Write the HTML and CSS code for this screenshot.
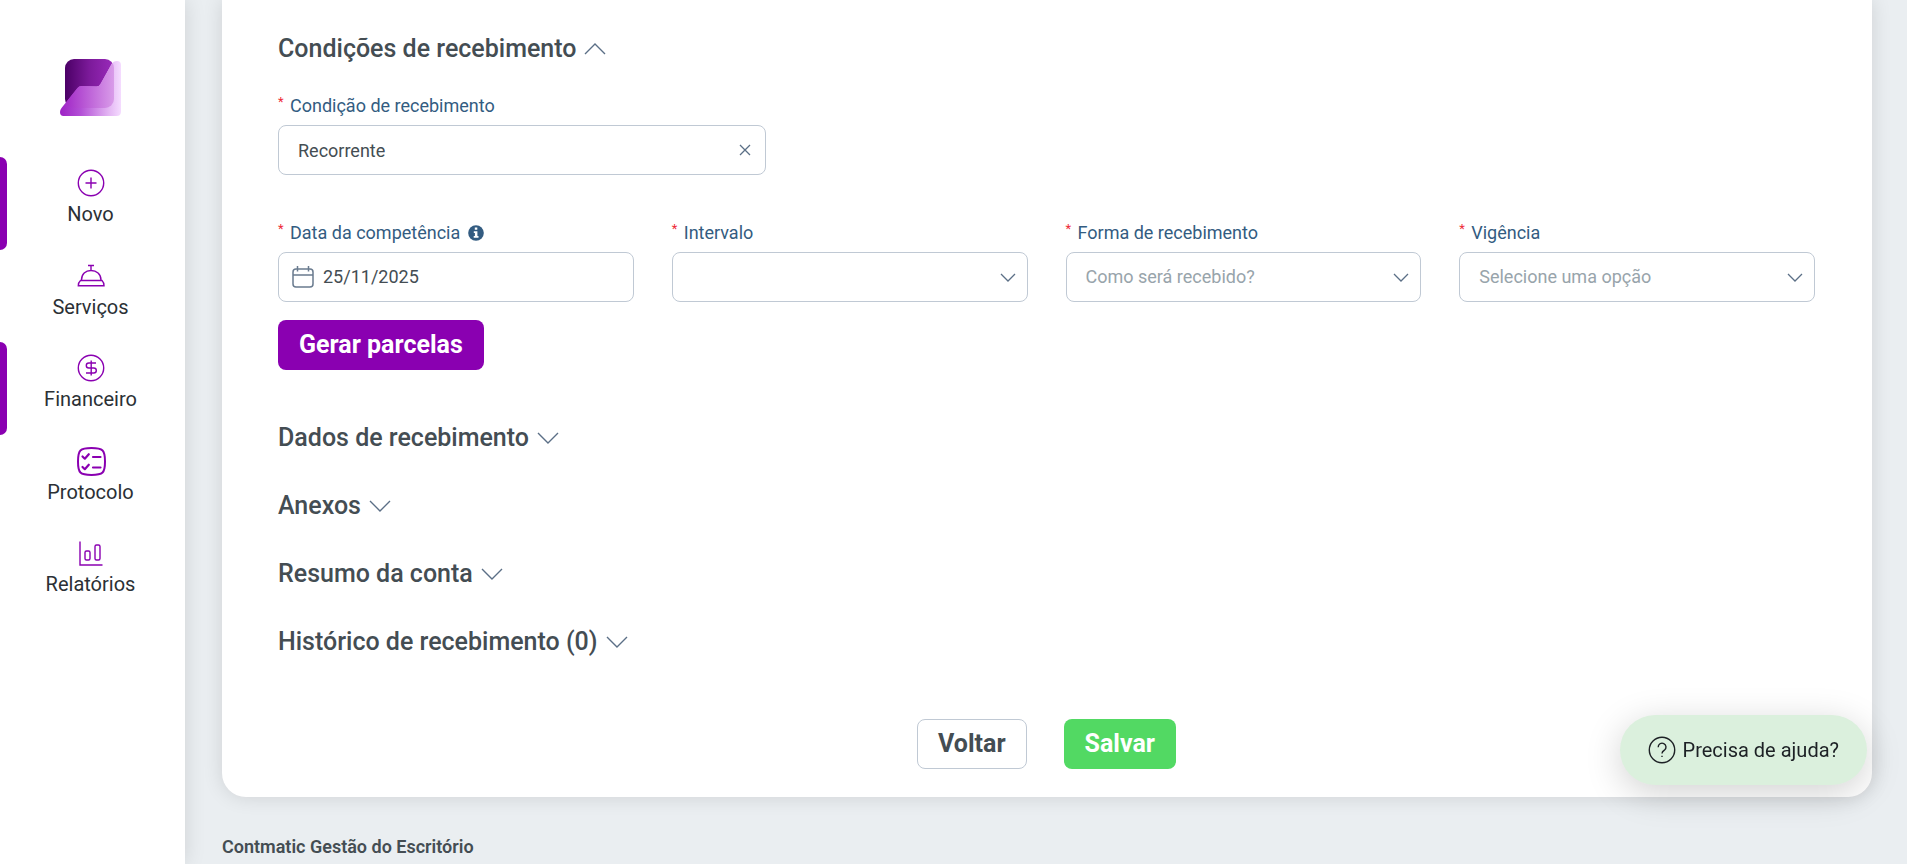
FILE: index.html
```html
<!DOCTYPE html>
<html lang="pt-BR">
<head>
<meta charset="utf-8">
<title>Contmatic Gestão do Escritório</title>
<link rel="stylesheet" href="styles.css">
</head>
<body>
<div class="app">
  <aside class="sidebar">
    <a class="logo" href="#" aria-label="Início">
      <svg width="62" height="58" viewBox="0 0 62 58">
        <defs>
          <linearGradient id="g1" x1="0" y1="0" x2="1" y2="0"><stop offset="0" stop-color="#4b0066"/><stop offset=".5" stop-color="#7c1a9a"/><stop offset="1" stop-color="#9a2bbb"/></linearGradient>
          <linearGradient id="g2" x1="0" y1="0" x2="1" y2="0"><stop offset="0" stop-color="#9c20c4"/><stop offset=".35" stop-color="#b350d6"/><stop offset=".8" stop-color="#e3b5f3"/><stop offset="1" stop-color="#f5dcff"/></linearGradient>
          <linearGradient id="g3" x1="0" y1="0" x2="1" y2="0"><stop offset="0" stop-color="#a32bc8"/><stop offset="1" stop-color="#d99ce9"/></linearGradient>
          <clipPath id="c1"><path d="M52.500 5.200Q54.500 2 58 2Q62 2 62 6V52.500Q62 57 57.500 57H4.500Q1 57 1 53Q1 51 2.500 49L18.500 29Q20 27 22.500 27L37.500 27.500Q40 27.500 41.500 25Z"/></clipPath>
        </defs>
        <rect x="6" y="0" width="49" height="49" rx="9" fill="url(#g1)"/>
        <g clip-path="url(#c1)">
          <rect width="62" height="58" fill="url(#g2)"/>
          <rect x="6" y="0" width="49" height="49" rx="9" fill="url(#g3)"/>
        </g>
      </svg>
    </a>
    <nav class="nav">
      <a class="nav-item marked" href="#">
        <svg class="nav-icon" viewBox="0 0 30 30"><circle cx="15" cy="15" r="12.700"/><path d="M15 9.500v11M9.500 15h11"/></svg>
        <span>Novo</span>
      </a>
      <a class="nav-item" href="#">
        <svg class="nav-icon" viewBox="0 0 30 30"><path d="M12 4.500h6M15 4.500v4.500M5.500 19C5.500 13 9.500 9.500 15 9.500S25 13 25 19M4.500 19.500h21.500q2 2 2 5.200H2.300q0-3.200 2.200-5.200Z"/></svg>
        <span>Serviços</span>
      </a>
      <a class="nav-item marked" href="#">
        <svg class="nav-icon" viewBox="0 0 30 30"><circle cx="15" cy="15" r="12.700"/><path d="M15.200 7.500v15M20 10H12.800a2.500 2.500 0 0 0 0 5h5a2.500 2.500 0 0 1 0 5H10"/></svg>
        <span>Financeiro</span>
      </a>
      <a class="nav-item" href="#">
        <svg class="nav-icon" viewBox="0 0 30 30"><path stroke-width="2" d="M2 15.500C2 4 4 2 15.500 2S29 4 29 15.500 27 29 15.500 29 2 27 2 15.500Z"/><path stroke-width="2.200" d="M6.500 10.500l2.300 2.200 4-4.500M6.500 21l2.300 2.200 4-4.500M17 11h7.500M17 21.500h7.500" stroke-linecap="round" stroke-linejoin="round"/></svg>
        <span>Protocolo</span>
      </a>
      <a class="nav-item" href="#">
        <svg class="nav-icon" viewBox="0 0 30 30"><path d="M4 3.500V27h22.500"/><rect x="9" y="13" width="5" height="9" rx="1.500"/><rect x="19" y="7" width="5" height="15" rx="1.500"/></svg>
        <span>Relatórios</span>
      </a>
    </nav>
  </aside>

  <main class="main">
    <form class="card">
      <button type="button" class="section-toggle" aria-expanded="true">Condições de recebimento
        <svg class="chevron" viewBox="0 0 22 12"><path d="M1 11L11 1L21 11"/></svg>
      </button>

      <div class="field field-condition">
        <label for="condicao"><span class="req">*</span>Condição de recebimento</label>
        <div class="control">
          <input id="condicao" type="text" value="Recorrente">
          <button type="button" class="clear" aria-label="Limpar"><svg width="12" height="12" viewBox="0 0 12 12"><path d="M1 1l10 10M11 1L1 11"/></svg></button>
        </div>
      </div>

      <div class="field-row">
        <div class="field">
          <label for="data"><span class="req">*</span>Data da competência
            <svg class="info" viewBox="0 0 16 16"><circle cx="8" cy="8" r="7.800" fill="#335c81"/><path fill="#fff" d="M6.800 2.500h2.500v2.300H6.800zM5.800 6.200h3.600v4.800h1.100v1.700H5.700V11h1.200V7.900H5.800z"/></svg>
          </label>
          <div class="control with-icon">
            <svg class="calendar" viewBox="0 0 22 22"><rect x="1" y="3" width="20" height="18" rx="3"/><path d="M1 9h20M5.500 0v5.500M16.500 0v5.500"/></svg>
            <input id="data" type="text" value="25/11/2025">
          </div>
        </div>
        <div class="field">
          <label for="intervalo"><span class="req">*</span>Intervalo</label>
          <div class="control">
            <select id="intervalo"><option></option></select>
            <svg class="arrow" viewBox="0 0 16 9"><path d="M1 1l7 7 7-7"/></svg>
          </div>
        </div>
        <div class="field">
          <label for="forma"><span class="req">*</span>Forma de recebimento</label>
          <div class="control">
            <select id="forma"><option>Como será recebido?</option></select>
            <svg class="arrow" viewBox="0 0 16 9"><path d="M1 1l7 7 7-7"/></svg>
          </div>
        </div>
        <div class="field">
          <label for="vigencia"><span class="req">*</span>Vigência</label>
          <div class="control">
            <select id="vigencia"><option>Selecione uma opção</option></select>
            <svg class="arrow" viewBox="0 0 16 9"><path d="M1 1l7 7 7-7"/></svg>
          </div>
        </div>
      </div>

      <button type="button" class="btn btn-primary">Gerar parcelas</button>

      <div class="sections">
        <button type="button" class="section-toggle" aria-expanded="false">Dados de recebimento
          <svg class="chevron" viewBox="0 0 22 12"><path d="M1 1L11 11L21 1"/></svg></button>
        <button type="button" class="section-toggle" aria-expanded="false">Anexos
          <svg class="chevron" viewBox="0 0 22 12"><path d="M1 1L11 11L21 1"/></svg></button>
        <button type="button" class="section-toggle" aria-expanded="false">Resumo da conta
          <svg class="chevron" viewBox="0 0 22 12"><path d="M1 1L11 11L21 1"/></svg></button>
        <button type="button" class="section-toggle" aria-expanded="false">Histórico de recebimento (0)
          <svg class="chevron" viewBox="0 0 22 12"><path d="M1 1L11 11L21 1"/></svg></button>
      </div>

      <div class="actions">
        <button type="button" class="btn btn-outline">Voltar</button>
        <button type="submit" class="btn btn-success">Salvar</button>
      </div>
    </form>
    <footer class="footer">Contmatic Gestão do Escritório</footer>
  </main>
</div>

<button type="button" class="help">
  <svg width="28" height="28" viewBox="0 0 28 28"><circle cx="14" cy="14" r="12.700"/><path d="M10.200 11.200a3.900 3.900 0 1 1 6.200 3c-1.500 1-2.400 1.600-2.400 3.300M14 19.700v1.400"/></svg>
  Precisa de ajuda?
</button>
</body>
</html>
```

FILE: styles.css
```css
* {
  box-sizing: border-box;
}

body {
  margin: 0;
  background: #eaeef1;
  color: #444d53;
  font-family: Roboto, "Liberation Sans", sans-serif;
  font-size: 18px;
  line-height: 24px;
}

button,
input,
select {
  margin: 0;
  font: inherit;
  color: inherit;
}

button {
  cursor: pointer;
}

svg {
  display: block;
  flex: none;
  fill: none;
}

.app {
  display: flex;
  min-height: 100vh;
}

/* Sidebar */
.sidebar {
  flex: none;
  width: 185px;
  padding-top: 59px;
  background: #fff;
  box-shadow: 0 0 20px rgba(0, 0, 0, 0.12);
}

.logo {
  display: block;
  width: 62px;
  margin: 0 auto 40px 59px;
}

.nav {
  display: grid;
  grid-auto-rows: 1fr;
  min-height: 463px;
}

.nav-item {
  position: relative;
  display: flex;
  flex-direction: column;
  align-items: center;
  gap: 4px;
  padding: 11px 8px 23px 4px;
  color: #2b3035;
  font-size: 20px;
  text-decoration: none;
}

.marked::before {
  content: "";
  position: absolute;
  inset: 0 auto 0 0;
  width: 7px;
  border-radius: 0 8px 8px 0;
  background: #8a00b1;
}

.nav-icon {
  width: 30px;
  height: 30px;
  stroke: #8a00b1;
  stroke-width: 1.4;
}

/* Main card */
.main {
  flex: 1;
  min-width: 0;
  padding: 0 35px 0 37px;
}

.card {
  padding: 33px 57px 28px 56px;
  border-radius: 0 0 24px 24px;
  background: #fff;
  box-shadow: 0 0 20px rgba(0, 0, 0, 0.12);
}

.section-toggle {
  display: flex;
  align-items: center;
  gap: 8px;
  padding: 0;
  border: 0;
  background: none;
  font-size: 25px;
  font-weight: 500;
  line-height: 32px;
}

.chevron {
  width: 22px;
  height: 12px;
  stroke: #5b6f86;
  stroke-width: 1.4;
}

.field label {
  display: flex;
  align-items: center;
  margin-bottom: 7px;
  color: #335c81;
}

.req {
  align-self: flex-start;
  width: 12px;
  color: #ee2b37;
  font-size: 13px;
  line-height: 16px;
}

.info {
  width: 16px;
  height: 16px;
  margin-left: 8px;
}

.field-condition {
  width: calc(100% / 3 - 24px);
  margin-top: 29px;
}

.control {
  position: relative;
  display: flex;
  align-items: center;
  height: 50px;
  border: 1px solid #c0c9d4;
  border-radius: 8px;
  background: #fff;
}

.control input,
.control select {
  flex: 1;
  min-width: 0;
  height: 100%;
  padding: 0 19px;
  border: 0;
  border-radius: 8px;
  outline: 0;
  background: none;
  appearance: none;
}

.control select {
  color: #98a4ab;
}

.with-icon {
  padding-left: 13px;
}

.control.with-icon input {
  padding: 0 9px 2px;
}

.calendar {
  width: 22px;
  height: 22px;
  stroke: #6a7b8f;
  stroke-width: 1.5;
}

.clear {
  margin-right: 14px;
  padding: 0;
  border: 0;
  background: none;
  stroke: #5b6f86;
  stroke-width: 1.3;
}

.arrow {
  position: absolute;
  right: 11px;
  width: 16px;
  height: 9px;
  stroke: #5b6f86;
  stroke-width: 1.3;
  pointer-events: none;
}

.field-row {
  display: grid;
  grid-template-columns: repeat(4, 1fr);
  gap: 38px;
  margin: 46px 0 18px;
}

.btn {
  height: 50px;
  padding: 0 20px;
  border: 1px solid transparent;
  border-radius: 8px;
  font-size: 25px;
  font-weight: 700;
}

.btn-primary {
  background: #8a00b1;
  color: #fff;
}

.btn-outline {
  border-color: #c0c9d4;
  background: #fff;
}

.btn-success {
  background: #52d963;
  color: #fff;
}

.sections {
  display: grid;
  justify-items: start;
  gap: 36px;
  margin-top: 52px;
}

.actions {
  display: flex;
  justify-content: center;
  gap: 37px;
  margin-top: 61px;
}

.footer {
  margin-top: 38px;
  font-weight: 600;
}

/* Help button */
.help {
  position: fixed;
  right: 40px;
  bottom: 79px;
  display: flex;
  align-items: center;
  gap: 7px;
  height: 70px;
  padding: 0 28px;
  border: 0;
  border-radius: 35px;
  background: #dbf0dd;
  box-shadow: 0 8px 36px rgba(0, 0, 0, 0.18);
  color: #1d2125;
  font-size: 20px;
}

.help svg {
  stroke: #1d2125;
  stroke-width: 1.4;
}
```
